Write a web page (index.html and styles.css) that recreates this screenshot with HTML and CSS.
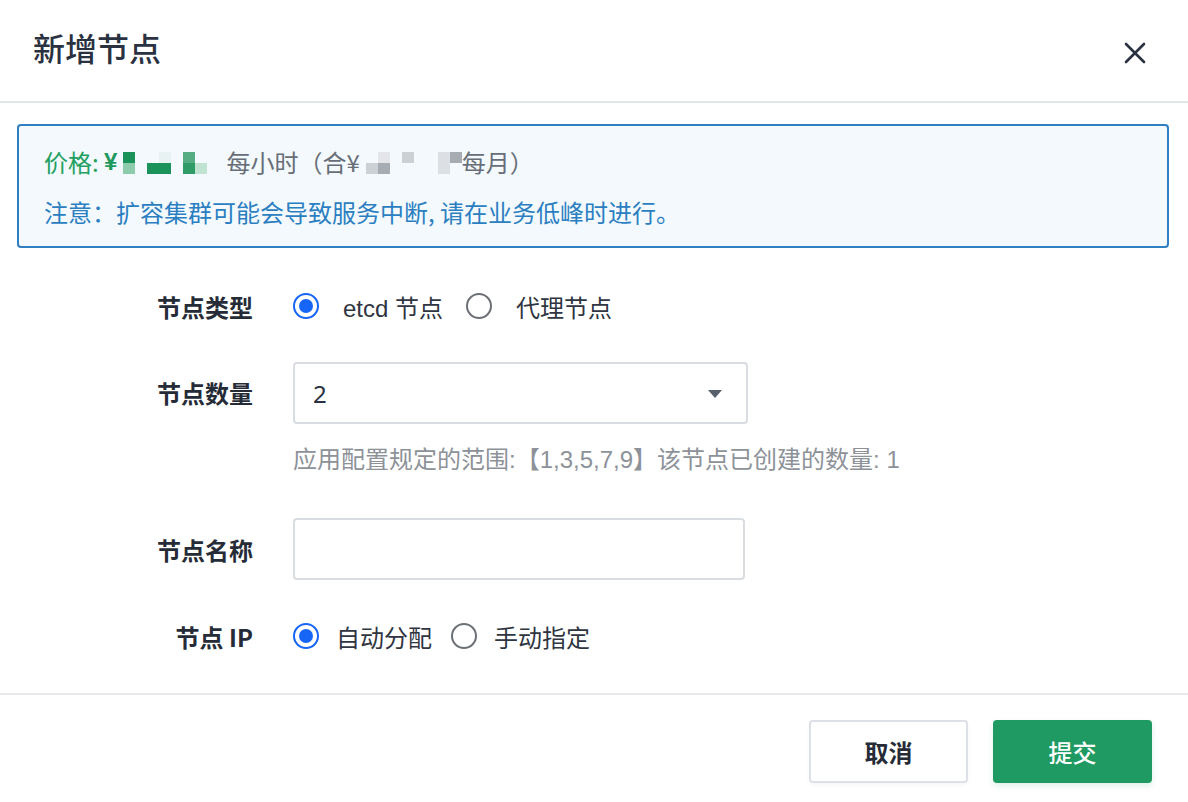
FILE: index.html
```html
<!DOCTYPE html>
<html>
	<head>
		<meta charset="UTF-8">
		<title>新增节点</title>
		<link rel="stylesheet" href="styles.css">
	</head>
	<body>

		<!-- 弹窗 -->
		<div class="dialog">

			<!-- 头部 -->
			<div class="dialog-header">
				<h2 class="dialog-title">新增节点</h2>
				<a class="dialog-close" href="javascript:;">
					<svg width="22" height="22" viewBox="0 0 22 22">
						<path d="M2 2 L20 20 M20 2 L2 20" stroke="#2a3140" stroke-width="2.6" stroke-linecap="round" fill="none"/>
					</svg>
				</a>
			</div>

			<!-- 提示 -->
			<div class="alert">
				<p class="alert-price">
					<span class="price-label">价格: </span><span class="price-yen">¥</span><span class="mosaic mosaic-green">
						<i class="g-dk"></i><i></i><i></i><i class="g-fa"></i><i></i><i class="g-md"></i><i></i>
						<i class="g-md2"></i><i></i><i class="g-dk"></i><i class="g-dk"></i><i></i><i class="g-dk2"></i><i class="g-lt"></i>
					</span><span class="price-text">每小时（合¥</span><span class="mosaic mosaic-gray">
						<i></i><i class="s-fa"></i><i></i><i class="s-lt"></i><i></i><i></i><i class="s-fa2"></i><i class="s-md"></i>
						<i class="s-lt"></i><i class="s-md"></i><i></i><i></i><i></i><i></i><i class="s-fa2"></i><i></i>
					</span><span class="price-text">每月）</span>
				</p>
				<p class="alert-notice">注意：扩容集群可能会导致服务中断, 请在业务低峰时进行。</p>
			</div>

			<!-- 表单 -->
			<form class="form">
				<div class="form-row">
					<label class="form-label">节点类型</label>
					<div class="form-control radios radios-type">
						<span class="radio checked"></span><span class="radio-text">etcd 节点</span>
						<span class="radio"></span><span class="radio-text">代理节点</span>
					</div>
				</div>

				<div class="form-row form-row-top">
					<label class="form-label">节点数量</label>
					<div class="form-control">
						<div class="select">
							<span>2</span>
							<i class="select-arrow"></i>
						</div>
						<p class="form-help">应用配置规定的范围:【1,3,5,7,9】该节点已创建的数量: 1</p>
					</div>
				</div>

				<div class="form-row">
					<label class="form-label">节点名称</label>
					<div class="form-control">
						<div class="input"></div>
					</div>
				</div>

				<div class="form-row">
					<label class="form-label">节点 IP</label>
					<div class="form-control radios radios-ip">
						<span class="radio checked"></span><span class="radio-text">自动分配</span>
						<span class="radio"></span><span class="radio-text">手动指定</span>
					</div>
				</div>
			</form>

			<!-- 底部按钮 -->
			<div class="dialog-footer">
				<a class="btn btn-default" href="javascript:;">取消</a>
				<a class="btn btn-primary" href="javascript:;">提交</a>
			</div>

		</div>

	</body>
</html>
```

FILE: styles.css
```css
*{
	margin: 0;
	padding: 0;
	box-sizing: border-box;
}

body{
	background-color: #fff;
	font-family: "Liberation Sans", "Noto Sans CJK SC", sans-serif;
	color: #2a3140;
}

a{
	text-decoration: none;
}

/*弹窗*/
.dialog{
	width: 1188px;
	height: 802px;
	background-color: #fff;
}

/*头部*/
.dialog-header{
	height: 103px;
	border-bottom: 2px solid #e1e7e7;
	display: flex;
	align-items: center;
	justify-content: space-between;
	padding: 0 42px 0 33px;
}

.dialog-title{
	font-family: "Noto Sans CJK SC", sans-serif;
	font-size: 32px;
	font-weight: 500;
	color: #2a3140;
	margin-top: -8px;
}

.dialog-close{
	display: flex;
	margin-top: 4px;
}

/*提示*/
.alert{
	margin: 21px 19px 0 17px;
	height: 124px;
	border: 2px solid #2f80c2;
	border-radius: 4px;
	background-color: #f3f9fd;
	padding: 11px 25px 9px;
	font-size: 24px;
	line-height: 50px;
}

.alert-price{
	display: flex;
	align-items: center;
	height: 50px;
}

.price-label{
	color: #22a05f;
	white-space: pre;
	font-family: "Noto Sans CJK SC", sans-serif;
}

.price-yen{
	color: #1e9a5c;
	font-weight: bold;
	margin-right: 6px;
}

.price-text{
	color: #686e77;
	font-family: "Noto Sans CJK SC", sans-serif;
}

/*打码的价格*/
.mosaic{
	display: inline-grid;
	grid-template-rows: 11px 11px;
	margin-top: 2px;
}

.mosaic-green{
	grid-template-columns: repeat(7, 12px);
	margin-right: 19px;
}

.mosaic-gray{
	grid-template-columns: repeat(8, 12px);
	margin-left: 6px;
}

.g-dk{ background-color: #1b9259; }
.g-dk2{ background-color: #2f9c68; }
.g-md{ background-color: #56ad83; }
.g-md2{ background-color: #8ccbac; }
.g-lt{ background-color: #bfe3d0; }
.g-fa{ background-color: #e9f2f2; }

.s-md{ background-color: #a7acb3; }
.s-lt{ background-color: #cdd0d5; }
.s-fa{ background-color: #e3e5e9; }
.s-fa2{ background-color: #dcdfe3; }

.alert-notice{
	color: #2b7fc1;
	font-family: "Noto Sans CJK SC", sans-serif;
}

/*表单*/
.form{
	padding: 27px 0 26px;
	border-bottom: 2px solid #e6e8eb;
}

.form-row{
	display: flex;
	align-items: center;
	min-height: 62px;
	margin-bottom: 25px;
}

.form-row:last-child{
	margin-bottom: 0;
}

.form-row-top{
	align-items: flex-start;
	margin-bottom: 43px;
}

.form-row-top .form-label{
	line-height: 62px;
}

.form-label{
	width: 254px;
	padding-right: 1px;
	text-align: right;
	font-family: "Noto Sans CJK SC", sans-serif;
	font-size: 24px;
	font-weight: bold;
	color: #262c37;
	flex-shrink: 0;
}

.form-control{
	margin-left: 39px;
	font-size: 24px;
	color: #2f3541;
}

/*单选*/
.radios{
	display: flex;
	align-items: center;
}

.radio{
	width: 26px;
	height: 26px;
	border: 2px solid #6c7076;
	border-radius: 50%;
	position: relative;
	flex-shrink: 0;
}

.radio.checked{
	border-color: #1765f6;
}

.radio.checked::after{
	content: "";
	position: absolute;
	left: 4px;
	top: 4px;
	width: 14px;
	height: 14px;
	border-radius: 50%;
	background-color: #1765f6;
}

.radio-text{
	font-family: "Liberation Sans", "Noto Sans CJK SC", sans-serif;
	color: #2f3541;
}

.radios-type .radio-text{
	margin: 0 23px 0 24px;
}

.radios-ip .radio-text{
	margin: 0 19px 0 17px;
	font-family: "Noto Sans CJK SC", sans-serif;
}

/*下拉框*/
.select{
	width: 455px;
	height: 62px;
	border: 2px solid #d9dce1;
	border-radius: 4px;
	display: flex;
	align-items: center;
	justify-content: space-between;
	padding: 0 24px 0 18px;
	font-family: "Noto Sans", sans-serif;
	font-size: 24px;
	color: #2a3140;
}

.select-arrow{
	width: 0;
	height: 0;
	border-left: 7px solid transparent;
	border-right: 7px solid transparent;
	border-top: 8px solid #58606c;
	margin-top: 2px;
}

.form-help{
	margin-top: 21px;
	line-height: 30px;
	font-size: 24px;
	color: #8d9299;
	font-family: "Liberation Sans", "Noto Sans CJK SC", sans-serif;
}

/*输入框*/
.input{
	width: 452px;
	height: 62px;
	border: 2px solid #d9dce1;
	border-radius: 4px;
}

/*底部*/
.dialog-footer{
	display: flex;
	justify-content: flex-end;
	gap: 25px;
	padding: 25px 36px 0 0;
}

.btn{
	width: 159px;
	height: 63px;
	border-radius: 4px;
	display: flex;
	align-items: center;
	justify-content: center;
	font-family: "Noto Sans CJK SC", sans-serif;
	font-size: 24px;
	font-weight: bold;
}

.btn-default{
	border: 2px solid #dde1e7;
	color: #262c37;
	background-color: #fff;
	box-shadow: 0 2px 4px rgba(0, 0, 0, 0.04);
}

.btn-primary{
	background-color: #1f9a62;
	color: #fff;
	font-weight: 500;
	box-shadow: 0 3px 6px rgba(31, 154, 98, 0.15);
}
```
